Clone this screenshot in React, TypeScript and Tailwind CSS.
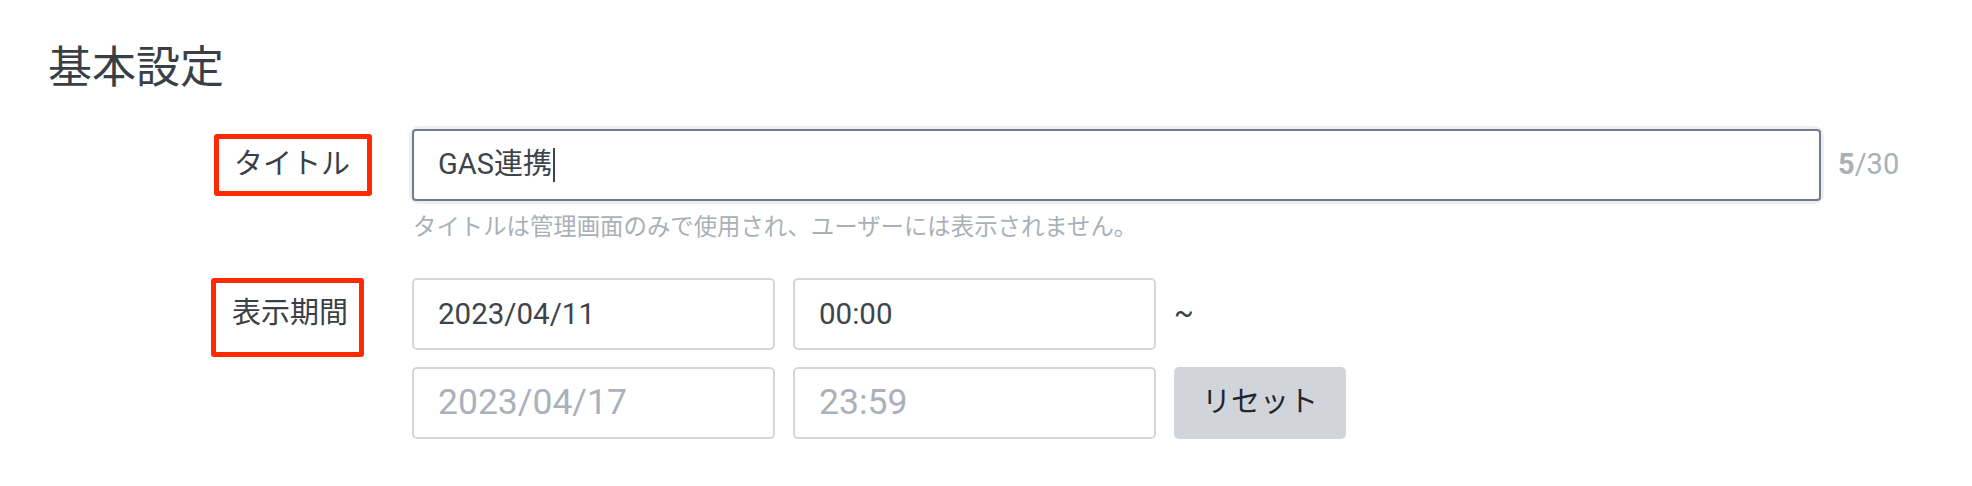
import React from 'react'

const font = { fontFamily: 'Roboto, "Noto Sans CJK JP", sans-serif' }

function DateField({ value, muted }: { value: string; muted?: boolean }) {
  return (
    <div
      className={`flex h-[72px] w-[363px] items-center rounded-[5px] border-2 border-[#d3d7dc] bg-white pl-[24px] ${
        muted ? 'text-[35.5px] text-[#aab1ba]' : 'text-[29.5px] text-[#3d444c]'
      }`}
    >
      {value}
    </div>
  )
}

export default function App() {
  return (
    <div className="min-h-[486px] w-[1972px] bg-white pt-[38px] pl-[48px]" style={font}>
      <h2 className="text-[44px] leading-[60px] font-normal text-[#3a3f46]">基本設定</h2>

      <div className="mt-[31px] pl-[166px]">
        {/* タイトル */}
        <div className="flex items-center">
          <div className="w-[198px]">
            <div className="flex h-[62px] w-[158px] items-center rounded-[3px] border-[5px] border-[#ff2a00] pl-[15px] text-[29px] text-[#3a3f46]">
              タイトル
            </div>
          </div>
          <div className="rounded-[7px] ring-[3px] ring-[#eceef1]">
            <div className="flex h-[72px] w-[1409px] items-center rounded-[4px] border-2 border-[#707990] bg-white pl-[24px] text-[29px] text-[#3d444c]">
              GAS連携
              <span className="ml-[1px] inline-block h-[34px] w-[2px] bg-[#3d444c]" />
            </div>
          </div>
          <div className="ml-[17px] text-[29px] text-[#a9b0b8]">
            <span className="font-bold">5</span>/30
          </div>
        </div>
        <div className="mt-[11px] pl-[199px] text-[23.4px] leading-[30px] text-[#a9b0b8]">
          タイトルは管理画面のみで使用され、ユーザーには表示されません。
        </div>

        {/* 表示期間 */}
        <div className="mt-[36px] flex items-start">
          <div className="w-[198px]">
            <div className="-ml-[3px] h-[79px] w-[153px] rounded-[3px] border-[5px] border-[#ff2a00] pt-[10px] pl-[16px] text-[29px] leading-[40px] text-[#3a3f46]">
              表示期間
            </div>
          </div>
          <div className="flex flex-col gap-[17px]">
            <div className="flex items-center gap-[18px]">
              <DateField value="2023/04/11" />
              <DateField value="00:00" />
              <span className="text-[29px] text-[#3a3f46]">~</span>
            </div>
            <div className="flex items-center gap-[18px]">
              <DateField value="2023/04/17" muted />
              <DateField value="23:59" muted />
              <button className="flex h-[72px] w-[172px] items-center justify-center rounded-[5px] bg-[#d1d5db] text-[29px] text-[#23272c]">
                リセット
              </button>
            </div>
          </div>
        </div>
      </div>
    </div>
  )
}
